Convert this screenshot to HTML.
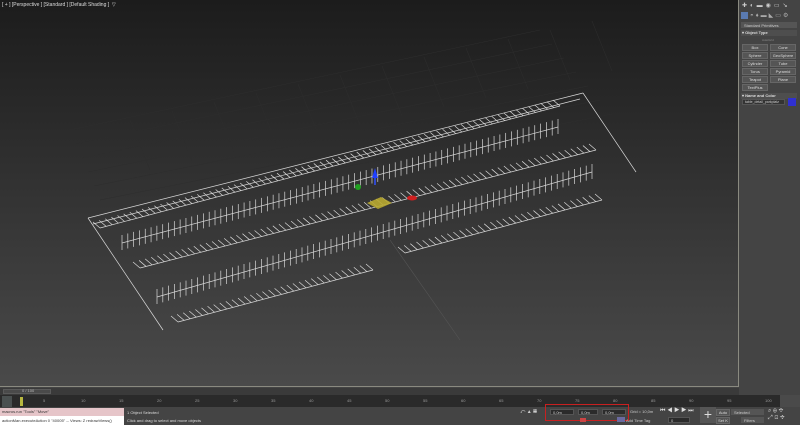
<!DOCTYPE html>
<html><head><meta charset="utf-8"><style>
*{margin:0;padding:0;box-sizing:border-box}
body{width:800px;height:425px;overflow:hidden;background:#444;font-family:"Liberation Sans",sans-serif;position:relative;color:#ccc}
.a{position:absolute}
#vp{left:0;top:0;width:739px;height:387px;background:linear-gradient(#1c1c1c 0%,#2c2c2c 35%,#4a4a4a 100%);border-right:1px solid #8a8a80;border-bottom:1px solid #8a8a80}
.t{font-size:5px;white-space:nowrap}
.btn{position:absolute;width:26px;height:7px;background:#555;border:1px solid #666;font-size:4px;text-align:center;line-height:6px;color:#ddd}
.fld{position:absolute;height:6px;background:#2b2b2b;border:1px solid #555;font-size:4px;color:#ccc;line-height:5px;padding-left:2px}
</style></head><body>
<div id="vp" class="a">
<div class="a t" style="left:2px;top:2px;color:#ddd">[ + ] [Perspective ] [Standard ] [Default Shading ] &nbsp;▽</div>
<svg id="sv" class="a" style="left:0;top:0" width="739" height="387"></svg>
</div>
<div class="a" style="left:0;top:388px;width:739px;height:7px;background:#3a3a3a"></div>
<div class="a" style="left:3px;top:389px;width:48px;height:5px;background:#4a4a4a;border:1px solid #5a5a5a"></div>
<div class="a t" style="left:22px;top:388px;font-size:4px;color:#bbb">0 / 100</div>
<div id="tr" class="a" style="left:0;top:395px;width:790px;height:12px;background:#2a2a2a"></div>
<div class="a" style="left:2px;top:396px;width:10px;height:11px;background:#4a5050"></div>
<div class="a" style="left:20px;top:397px;width:3px;height:9px;background:#b8b840"></div>
<div class="a" style="left:780px;top:395px;width:20px;height:12px;background:#4a4a4a"></div>
<div class="a t" style="left:0;top:408px;width:124px;height:8px;background:#e6c5c9;color:#333;font-size:4px;padding:1px 2px">macros.run "Tools" "Move"</div>
<div class="a t" style="left:0;top:416px;width:124px;height:9px;background:#fff;color:#333;font-size:4px;padding:2px 2px">actionMan.executeAction 0 "40005"  -- Views: Z  redrawViews()</div>
<div class="a t" style="left:127px;top:410px;font-size:4px;color:#ddd">1 Object Selected</div>
<div class="a t" style="left:127px;top:418px;font-size:4px;color:#ddd">Click and drag to select and move objects</div>
<div class="a" style="left:545px;top:404px;width:84px;height:17px;border:1px solid #c82020"></div>
<div class="fld" style="left:550px;top:409px;width:24px"> 0,0m</div>
<div class="fld" style="left:578px;top:409px;width:20px"> 0,0m</div>
<div class="fld" style="left:602px;top:409px;width:24px"> 0,0m</div>
<div class="a t" style="left:520px;top:409px;font-size:5px">⤺ ▲ ▦</div>
<div class="a t" style="left:630px;top:409px;font-size:4px">Grid = 10,0m</div>
<div class="a" style="left:580px;top:418px;width:6px;height:4px;background:#c44"></div>
<div class="a" style="left:617px;top:417px;width:8px;height:5px;background:#6a6aa0"></div>
<div class="a t" style="left:626px;top:418px;font-size:4px">Add Time Tag</div>
<div class="a t" style="left:660px;top:408px;font-size:6px;color:#ddd">⏮ ◀ ▶ ▶ ⏭</div>
<div class="fld" style="left:668px;top:417px;width:22px">0</div>
<div class="a" style="left:700px;top:407px;width:16px;height:16px;background:#555;color:#ddd;font-size:14px;text-align:center;line-height:15px">+</div>
<div class="btn" style="left:716px;top:409px;width:14px">Auto</div>
<div class="btn" style="left:716px;top:417px;width:14px">Set K</div>
<div class="fld" style="left:731px;top:409px;width:33px;background:#555">Selected</div>
<div class="fld" style="left:741px;top:417px;width:23px;background:#555">Filters</div>
<div class="a t" style="left:768px;top:408px;font-size:6px;color:#ccc">⌕ ⊕ ✥<br>⤢ ⊡ ✥</div>
<div class="a" style="left:740px;top:0;width:60px;height:388px;background:#444"></div>
<div class="a t" style="left:742px;top:2px;font-size:6px;color:#ccc;letter-spacing:3px">✚◐▬◉▭↘</div>
<div class="a" style="left:741px;top:12px;width:7px;height:7px;background:#5a7ab0"></div>
<div class="a t" style="left:750px;top:12px;font-size:6px;color:#aaa;letter-spacing:2px">◓♦▬◣▭⚙</div>
<div class="fld" style="left:741px;top:22px;width:56px;background:#555">Standard Primitives</div>
<div class="a" style="left:741px;top:30px;width:56px;height:6px;background:#4e4e4e"></div>
<div class="a t" style="left:742px;top:30px;font-size:4px;color:#ddd;font-weight:bold">▾ Object Type</div>
<div class="a t" style="left:762px;top:38px;font-size:3px;color:#888">AutoGrid</div>
<div class="btn" style="left:742px;top:44px">Box</div><div class="btn" style="left:770px;top:44px">Cone</div>
<div class="btn" style="left:742px;top:52px">Sphere</div><div class="btn" style="left:770px;top:52px">GeoSphere</div>
<div class="btn" style="left:742px;top:60px">Cylinder</div><div class="btn" style="left:770px;top:60px">Tube</div>
<div class="btn" style="left:742px;top:68px">Torus</div><div class="btn" style="left:770px;top:68px">Pyramid</div>
<div class="btn" style="left:742px;top:76px">Teapot</div><div class="btn" style="left:770px;top:76px">Plane</div>
<div class="btn" style="left:742px;top:84px">TextPlus</div>
<div class="a" style="left:741px;top:93px;width:56px;height:6px;background:#4e4e4e"></div>
<div class="a t" style="left:742px;top:93px;font-size:4px;color:#ddd;font-weight:bold">▾ Name and Color</div>
<div class="fld" style="left:742px;top:99px;width:43px;background:#333;font-size:3.5px">table_detail_parkplatz</div>
<div class="a" style="left:788px;top:98px;width:8px;height:8px;background:#3030d0"></div>
<script>
var s=document.getElementById('sv'),h='';
function L(x1,y1,x2,y2,c,w){h+='<line x1="'+x1+'" y1="'+y1+'" x2="'+x2+'" y2="'+y2+'" stroke="'+(c||'#d8d8d8')+'" stroke-width="'+(w||0.7)+'"/>';}
for(var i=0;i<7;i++){L(70+i*6,130+i*14,540+i*12,30+i*14,'#2e2e2e',0.5);}
for(var i=0;i<12;i++){L(130+i*42,120-i*9,150+i*42,170-i*9,'#2e2e2e',0.5);}
L(88,218,583,93);L(583,93,636,172);L(88,218,163,330);L(93,224,580,99);
L(390,240,460,340,'#555',0.6);
function vrow(x1,y1,x2,y2,n){L(x1,y1,x2,y2);for(var i=0;i<=n;i++){var t=i/n,x=x1+(x2-x1)*t,y=y1+(y2-y1)*t;L(x,y-8,x,y+7);}}
function drow(x1,y1,x2,y2,n){L(x1,y1,x2,y2);for(var i=0;i<=n;i++){var t=i/n,x=x1+(x2-x1)*t,y=y1+(y2-y1)*t;L(x,y,x-7,y-6);}}
drow(100,228,560,106,75);
vrow(122,243,558,127,75);
drow(140,268,596,150,75);
vrow(157,297,592,172,75);
drow(178,322,373,270,32);
drow(405,253,602,200,32);
h+='<polygon points="367,203 381,197 392,203 378,209" fill="#b8a830" opacity="0.9"/>';
L(375,185,375,172,'#3050ff',1.5);h+='<polygon points="372,178 375,168 378,178" fill="#2040ff"/>';
h+='<circle cx="358" cy="187" r="3" fill="#20a020"/>';
h+='<ellipse cx="412" cy="198" rx="5" ry="2.5" fill="#d02020"/>';
s.innerHTML=h;
var tr=document.getElementById('tr'),q='';
for(var k=0;k<=100;k+=5){var x=8+k*7.6;q+='<div style="position:absolute;left:'+(x-3)+'px;top:3px;font-size:4px;color:#999">'+k+'</div>';}
tr.innerHTML=q;
</script>
</body></html>
